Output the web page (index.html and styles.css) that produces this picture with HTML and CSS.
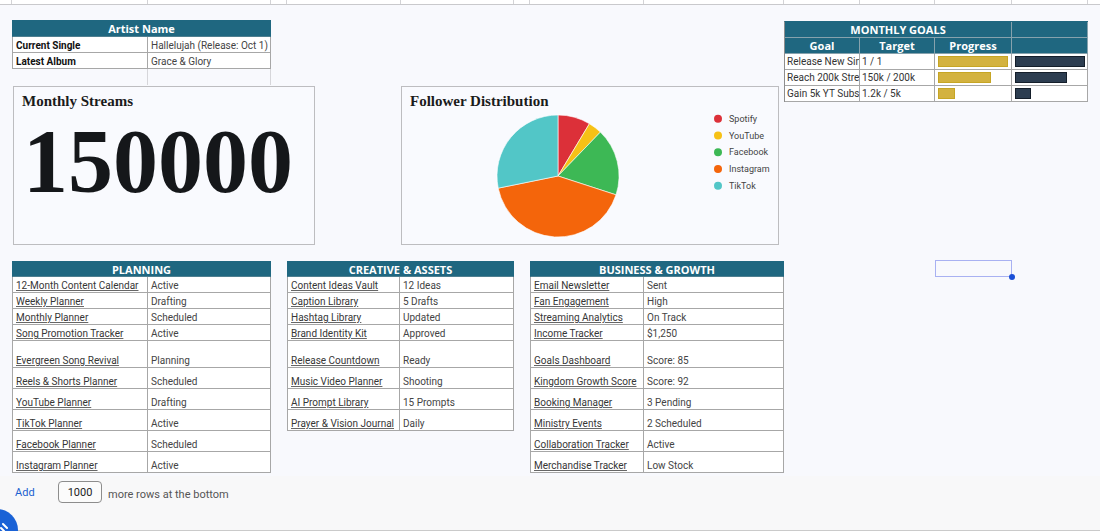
FILE: index.html
```html
<!DOCTYPE html>
<html lang="en">
<head>
<meta charset="utf-8">
<title>Artist Dashboard</title>
<link rel="stylesheet" href="styles.css">
</head>
<body>
<div class="colstrip">
  <span class="c" style="width:12px"></span>
  <span class="c" style="width:136px"></span>
  <span class="c" style="width:123px"></span>
  <span class="c" style="width:16px"></span>
  <span class="c" style="width:114px"></span>
  <span class="c" style="width:113px"></span>
  <span class="c" style="width:16px"></span>
  <span class="c" style="width:114px"></span>
  <span class="c" style="width:140px"></span>
  <span class="c" style="width:76px"></span>
  <span class="c" style="width:75px"></span>
  <span class="c" style="width:77px"></span>
  <span class="c" style="width:76px"></span>
</div>

<main class="sheet">
  <section class="top">
    <div class="left">
      <div class="tbl artist">
        <div class="hdr">Artist Name</div>
        <div class="row r16"><div class="cell key">Current Single</div><div class="cell val">Hallelujah (Release: Oct 1)</div></div>
        <div class="row r16"><div class="cell key">Latest Album</div><div class="cell val">Grace &amp; Glory</div></div>
        <div class="row r16 ghost"><div class="cell"></div><div class="cell"></div></div>
      </div>
      <div class="charts">
        <div class="chart streams">
          <h3 class="chart-title">Monthly Streams</h3>
          <div class="bignum">150000</div>
        </div>
        <div class="chart follower">
          <h3 class="chart-title">Follower Distribution</h3>
          <svg class="pie" width="376" height="157" viewBox="0 0 376 157">
            <g stroke="#ffffff" stroke-width="0.6">
              <path d="M156 89 L156 28 A61 61 0 0 1 187.42 36.71 Z" fill="#dc3039"/>
              <path d="M156 89 L187.42 36.71 A61 61 0 0 1 198.38 45.12 Z" fill="#f6c116"/>
              <path d="M156 89 L198.38 45.12 A61 61 0 0 1 214.02 107.85 Z" fill="#3db855"/>
              <path d="M156 89 L214.02 107.85 A61 61 0 0 1 96.23 101.16 Z" fill="#f4650b"/>
              <path d="M156 89 L96.23 101.16 A61 61 0 0 1 156 28 Z" fill="#52c6c7"/>
            </g>
            <g class="legend">
              <circle cx="316" cy="31.7" r="4" fill="#dc3039"/><text x="327" y="34.8">Spotify</text>
              <circle cx="316" cy="48.4" r="4" fill="#f6c116"/><text x="327" y="51.5">YouTube</text>
              <circle cx="316" cy="65.2" r="4" fill="#3db855"/><text x="327" y="68.3">Facebook</text>
              <circle cx="316" cy="81.9" r="4" fill="#f4650b"/><text x="327" y="85">Instagram</text>
              <circle cx="316" cy="98.7" r="4" fill="#52c6c7"/><text x="327" y="101.8">TikTok</text>
            </g>
          </svg>
        </div>
      </div>
    </div>

    <div class="tbl goals">
      <div class="grow ghdr">
        <div class="gcell span3">MONTHLY GOALS</div>
        <div class="gcell"></div>
      </div>
      <div class="grow ghdr">
        <div class="gcell">Goal</div>
        <div class="gcell">Target</div>
        <div class="gcell">Progress</div>
        <div class="gcell"></div>
      </div>
      <div class="grow">
        <div class="gcell txt">Release New Single</div>
        <div class="gcell txt">1 / 1</div>
        <div class="gcell bar-cell"><span class="bar gold" style="width:70px"></span></div>
        <div class="gcell bar-cell"><span class="bar dark" style="width:70px"></span></div>
      </div>
      <div class="grow">
        <div class="gcell txt">Reach 200k Streams</div>
        <div class="gcell txt">150k / 200k</div>
        <div class="gcell bar-cell"><span class="bar gold" style="width:53px"></span></div>
        <div class="gcell bar-cell"><span class="bar dark" style="width:52px"></span></div>
      </div>
      <div class="grow">
        <div class="gcell txt">Gain 5k YT Subs</div>
        <div class="gcell txt">1.2k / 5k</div>
        <div class="gcell bar-cell"><span class="bar gold" style="width:17px"></span></div>
        <div class="gcell bar-cell"><span class="bar dark" style="width:16px"></span></div>
      </div>
    </div>
  </section>

  <section class="lists">
    <div class="tbl list planning">
      <div class="hdr h16">PLANNING</div>
      <div class="row r16"><div class="cell"><a href="#">12-Month Content Calendar</a></div><div class="cell val">Active</div></div>
      <div class="row r16"><div class="cell"><a href="#">Weekly Planner</a></div><div class="cell val">Drafting</div></div>
      <div class="row r16"><div class="cell"><a href="#">Monthly Planner</a></div><div class="cell val">Scheduled</div></div>
      <div class="row r16"><div class="cell"><a href="#">Song Promotion Tracker</a></div><div class="cell val">Active</div></div>
      <div class="row r27"><div class="cell"><a href="#">Evergreen Song Revival</a></div><div class="cell val">Planning</div></div>
      <div class="row r21"><div class="cell"><a href="#">Reels &amp; Shorts Planner</a></div><div class="cell val">Scheduled</div></div>
      <div class="row r21"><div class="cell"><a href="#">YouTube Planner</a></div><div class="cell val">Drafting</div></div>
      <div class="row r21"><div class="cell"><a href="#">TikTok Planner</a></div><div class="cell val">Active</div></div>
      <div class="row r21"><div class="cell"><a href="#">Facebook Planner</a></div><div class="cell val">Scheduled</div></div>
      <div class="row r21"><div class="cell"><a href="#">Instagram Planner</a></div><div class="cell val">Active</div></div>
    </div>

    <div class="tbl list creative">
      <div class="hdr h16">CREATIVE &amp; ASSETS</div>
      <div class="row r16"><div class="cell"><a href="#">Content Ideas Vault</a></div><div class="cell val">12 Ideas</div></div>
      <div class="row r16"><div class="cell"><a href="#">Caption Library</a></div><div class="cell val">5 Drafts</div></div>
      <div class="row r16"><div class="cell"><a href="#">Hashtag Library</a></div><div class="cell val">Updated</div></div>
      <div class="row r16"><div class="cell"><a href="#">Brand Identity Kit</a></div><div class="cell val">Approved</div></div>
      <div class="row r27"><div class="cell"><a href="#">Release Countdown</a></div><div class="cell val">Ready</div></div>
      <div class="row r21"><div class="cell"><a href="#">Music Video Planner</a></div><div class="cell val">Shooting</div></div>
      <div class="row r21"><div class="cell"><a href="#">AI Prompt Library</a></div><div class="cell val">15 Prompts</div></div>
      <div class="row r21"><div class="cell"><a href="#">Prayer &amp; Vision Journal</a></div><div class="cell val">Daily</div></div>
    </div>

    <div class="tbl list business">
      <div class="hdr h16">BUSINESS &amp; GROWTH</div>
      <div class="row r16"><div class="cell"><a href="#">Email Newsletter</a></div><div class="cell val">Sent</div></div>
      <div class="row r16"><div class="cell"><a href="#">Fan Engagement</a></div><div class="cell val">High</div></div>
      <div class="row r16"><div class="cell"><a href="#">Streaming Analytics</a></div><div class="cell val">On Track</div></div>
      <div class="row r16"><div class="cell"><a href="#">Income Tracker</a></div><div class="cell val">$1,250</div></div>
      <div class="row r27"><div class="cell"><a href="#">Goals Dashboard</a></div><div class="cell val">Score: 85</div></div>
      <div class="row r21"><div class="cell"><a href="#">Kingdom Growth Score</a></div><div class="cell val">Score: 92</div></div>
      <div class="row r21"><div class="cell"><a href="#">Booking Manager</a></div><div class="cell val">3 Pending</div></div>
      <div class="row r21"><div class="cell"><a href="#">Ministry Events</a></div><div class="cell val">2 Scheduled</div></div>
      <div class="row r21"><div class="cell"><a href="#">Collaboration Tracker</a></div><div class="cell val">Active</div></div>
      <div class="row r21"><div class="cell"><a href="#">Merchandise Tracker</a></div><div class="cell val">Low Stock</div></div>
    </div>

    <div class="selbox"><span class="handle"></span></div>
  </section>
</main>

<footer class="addrow">
  <span class="add">Add</span>
  <span class="count">1000</span>
  <span class="more">more rows at the bottom</span>
</footer>

<div class="fab">
  <svg width="42" height="42" viewBox="0 0 42 42"><path d="M27 15 L31 19 M25 19 L28 22" stroke="#fff" stroke-width="2" fill="none" stroke-linecap="round"/></svg>
</div>
</body>
</html>
```

FILE: styles.css
```css
* { box-sizing: border-box; }

html, body {
  margin: 0;
  padding: 0;
}

body {
  width: 1100px;
  height: 531px;
  overflow: hidden;
  position: relative;
  background: #f8f9fd;
  font-family: Roboto, "Liberation Sans", Arial, sans-serif;
  font-size: 10px;
  color: #333;
}

/* top column strip */
.colstrip {
  display: flex;
  height: 5px;
  background: #ffffff;
  border-bottom: 1px solid #c9c9cc;
}
.colstrip .c {
  height: 100%;
  border-right: 1px solid #d3d3d6;
}

.sheet {
  height: 471px;
  padding-top: 15px;
}

/* ---------- top section ---------- */
.top {
  display: flex;
  padding-left: 12px;
}
.left {
  width: 772px;
  display: flex;
  flex-direction: column;
}

/* generic table parts */
.hdr {
  background: #1f6780;
  color: #fff;
  font-family: "Open Sans", "Liberation Sans", sans-serif;
  font-weight: 700;
  font-size: 11px;
  text-align: center;
  height: 17px;
  line-height: 16px;
  border: 1px solid #1f6780;
  border-bottom: 1px solid #4e7f90;
}
.hdr.h16 {
  height: 16px;
  line-height: 15px;
}

.row {
  display: grid;
  background: #ffffff;
}
.r16 { height: 16px; }
.r20 { height: 20px; }
.r21 { height: 21px; }
.r27 { height: 27px; }

.cell {
  border-right: 1px solid #a7a7a7;
  border-bottom: 1px solid #a7a7a7;
  padding: 0 3px 0 3px;
  display: flex;
  align-items: flex-end;
  line-height: 13px;
  white-space: nowrap;
  overflow: hidden;
  color: #2f2f2f;
}
.cell:first-child {
  border-left: 1px solid #a7a7a7;
}
.cell.key {
  font-weight: 700;
  color: #111;
}
.cell.val {
  color: #444;
}
.cell a {
  color: #363636;
  text-decoration: underline;
  text-decoration-color: #666;
  text-underline-offset: 1px;
}

/* artist table */
.artist { width: 259px; }
.artist .row { grid-template-columns: 136px 123px; }
.row.ghost { background: transparent; }
.row.ghost .cell {
  border-bottom: none;
  border-right-color: #d6d6da;
}
.row.ghost .cell:first-child { border-left: none; }

/* charts */
.charts {
  display: flex;
  gap: 86px;
  padding-left: 1px;
  margin-top: 1px;
}
.chart {
  height: 159px;
  border: 1px solid #bdbdc0;
  background: #f9fafe;
}
.streams {
  width: 302px;
  padding: 6px 0 0 8px;
}
.chart-title {
  margin: 0;
  font-family: "Liberation Serif", "Times New Roman", serif;
  font-weight: 700;
  font-size: 15px;
  line-height: 17px;
  color: #1b1b1b;
}
.bignum {
  font-family: "Liberation Serif", "Times New Roman", serif;
  font-weight: 700;
  font-size: 90px;
  line-height: 90px;
  color: #15171a;
  margin-top: 7px;
  margin-left: 1px;
}
.follower {
  width: 378px;
  display: grid;
}
.follower > * {
  grid-area: 1 / 1;
}
.follower .chart-title {
  padding: 6px 0 0 8px;
  align-self: start;
}
.pie { display: block; }
.legend text {
  font-family: Roboto, "Liberation Sans", sans-serif;
  font-size: 9px;
  fill: #444;
}

/* goals table */
.goals {
  width: 304px;
  margin-top: 1px;
  align-self: flex-start;
  border-left: 1px solid #8e8e8e;
  border-top: 1px solid #1f6780;
}
.grow {
  display: grid;
  grid-template-columns: 75px 75px 77px 76px;
  height: 16px;
  background: #ffffff;
}
.gcell {
  border-right: 1px solid #a7a7a7;
  border-bottom: 1px solid #a7a7a7;
  white-space: nowrap;
  overflow: hidden;
  line-height: 15px;
}
.ghdr {
  background: #1f6780;
}
.ghdr .gcell {
  color: #fff;
  font-family: "Open Sans", "Liberation Sans", sans-serif;
  font-weight: 700;
  font-size: 11px;
  text-align: center;
  border-color: #86a2ad;
}
.gcell.span3 {
  grid-column: span 3;
}
.gcell.txt {
  padding-left: 2px;
  color: #333;
}
.bar-cell {
  padding: 2px 3px 0 3px;
}
.bar {
  display: block;
  height: 11px;
  border: 1px solid;
}
.bar.gold {
  background: #d3b23f;
  border-color: #c6a524;
}
.bar.dark {
  background: #2c3d50;
  border-color: #141e2a;
}

/* ---------- lists ---------- */
.lists {
  display: flex;
  align-items: flex-start;
  padding-left: 12px;
  margin-top: 16px;
}
.list + .list { margin-left: 16px; }
.planning { width: 259px; }
.planning .row { grid-template-columns: 136px 123px; }
.creative { width: 227px; }
.creative .row { grid-template-columns: 113px 114px; }
.business { width: 254px; }
.business .row { grid-template-columns: 114px 140px; }

.selbox {
  position: relative;
  width: 77px;
  height: 17px;
  margin-left: 151px;
  margin-top: -1px;
  border: 1px solid #a8b1f2;
}
.handle {
  position: absolute;
  right: -4px;
  bottom: -4px;
  width: 6px;
  height: 6px;
  border-radius: 50%;
  background: #1a4fd6;
}

/* ---------- footer ---------- */
.addrow {
  height: 55px;
  display: flex;
  align-items: flex-start;
  padding: 5px 0 0 15px;
  background: #f8f8f9;
  border-bottom: 1px solid #cacaca;
  font-size: 11px;
}
.add {
  color: #1a5fd0;
  width: 43px;
  margin-top: 5px;
  font-size: 11px;
}
.count {
  width: 44px;
  height: 22px;
  border: 1px solid #8d8d8d;
  border-radius: 4px;
  background: #fbfbfb;
  display: flex;
  align-items: center;
  justify-content: center;
  color: #222;
  font-size: 11px;
}
.more {
  margin-left: 6px;
  margin-top: 7px;
  color: #555;
  font-size: 11px;
}

.fab {
  position: absolute;
  left: -24px;
  top: 509px;
  width: 42px;
  height: 42px;
  border-radius: 50%;
  background: #1a62d6;
}
.fab svg { display: block; }
```
